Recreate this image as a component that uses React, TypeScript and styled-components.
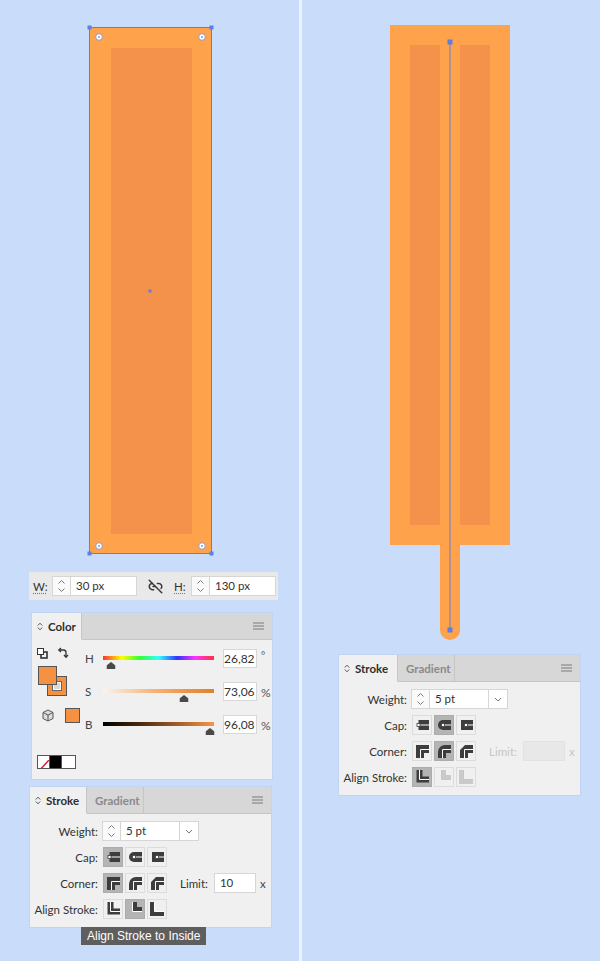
import React from "react";
import styled, { createGlobalStyle } from "styled-components";
import { Link2Off } from "lucide-react";

const ORANGE = "#f59242";
const ART_OUTER = "#fea24b";
const ART_INNER = "#f4924c";
const SEL_BLUE = "#5b7fe2";

const GlobalStyle = createGlobalStyle`
  html, body { margin: 0; padding: 0; background: #c9dcfa; }
  body { font-family: "Lato", "Open Sans", sans-serif; }
  #root { width: 600px; height: 961px; }
`;

const Page = styled.div`
  display: flex;
  width: 600px;
  height: 961px;
  background: #c9dcfa;
  overflow: hidden;
`;

const Column = styled.div<{ $w: number }>`
  width: ${(p) => p.$w}px;
  flex-shrink: 0;
  display: flex;
  flex-direction: column;
`;

const Divider = styled.div`
  width: 3px;
  flex-shrink: 0;
  background: #e8f4ff;
`;

const Canvas = styled.svg`
  display: block;
  flex-shrink: 0;
`;

/* ---------- size bar ---------- */
const SizeBar = styled.div`
  margin-left: 29px;
  width: 249px;
  height: 28px;
  background: #e9e9e9;
  display: flex;
  align-items: center;
  padding-left: 4px;
  box-sizing: border-box;
  font-size: 11.5px;
  color: #333;
`;

const DimLabel = styled.span<{ $w: number }>`
  width: ${(p) => p.$w}px;
  text-decoration: underline dotted #777;
  text-underline-offset: 2px;
`;

const FieldGroup = styled.div`
  display: flex;
  height: 20px;
  background: #fff;
  border: 1px solid #d6d6d6;
  box-sizing: border-box;
`;

const Spinner = styled.div<{ $w?: number }>`
  width: ${(p) => p.$w ?? 17}px;
  border-right: 1px solid #d6d6d6;
  display: flex;
  align-items: center;
  justify-content: center;
  background: #fafafa;
`;

const FieldText = styled.div<{ $w: number }>`
  width: ${(p) => p.$w}px;
  padding-left: 5px;
  box-sizing: border-box;
  font-size: 11.5px;
  line-height: 18px;
  color: #333;
`;

const Dropdown = styled.div`
  width: 18px;
  border-left: 1px solid #d6d6d6;
  display: flex;
  align-items: center;
  justify-content: center;
`;

const LinkSlot = styled.div`
  width: 37px;
  display: flex;
  justify-content: center;
  color: #3a3a3a;
`;

/* ---------- panels ---------- */
const Panel = styled.div<{ $w: number; $h: number; $mt: number; $ml: number }>`
  width: ${(p) => p.$w}px;
  height: ${(p) => p.$h}px;
  margin-top: ${(p) => p.$mt}px;
  margin-left: ${(p) => p.$ml}px;
  background: #f0f0f0;
  box-shadow: 0 0 0 1px rgba(0, 0, 0, 0.035);
  display: flex;
  flex-direction: column;
  flex-shrink: 0;
`;

const TabBar = styled.div`
  display: flex;
  height: 27px;
  flex-shrink: 0;
  background: #d7d7d7;
`;

const Tab = styled.div<{ $active?: boolean; $w: number }>`
  width: ${(p) => p.$w}px;
  box-sizing: border-box;
  display: flex;
  align-items: center;
  gap: 5px;
  padding-left: ${(p) => (p.$active ? 5 : 8)}px;
  font-size: 11.5px;
  font-weight: 700;
  color: ${(p) => (p.$active ? "#2e2e2e" : "#8a8a8a")};
  background: ${(p) => (p.$active ? "#f0f0f0" : "#d7d7d7")};
  border-right: 1px solid #c6c6c6;
  border-bottom: 1px solid ${(p) => (p.$active ? "#f0f0f0" : "#c6c6c6")};
`;

const TabFill = styled.div`
  flex: 1;
  display: flex;
  align-items: center;
  justify-content: flex-end;
  padding-right: 8px;
  border-bottom: 1px solid #c6c6c6;
`;

/* ---------- color panel ---------- */
const ColorBody = styled.div`
  display: flex;
  flex: 1;
`;

const SwatchCol = styled.div`
  width: 53px;
  padding-left: 5px;
  box-sizing: border-box;
  display: flex;
  flex-direction: column;
`;

const IconRow = styled.div<{ $mt: number; $gap: number; $pl?: number }>`
  display: flex;
  align-items: center;
  gap: ${(p) => p.$gap}px;
  margin-top: ${(p) => p.$mt}px;
  padding-left: ${(p) => p.$pl ?? 0}px;
`;

const FillStroke = styled.div`
  position: relative;
  width: 30px;
  height: 30px;
  margin-top: 7px;
  margin-left: 1px;
`;

const FillSwatch = styled.div`
  position: absolute;
  left: 0;
  top: 0;
  width: 19px;
  height: 19px;
  box-sizing: border-box;
  background: ${ORANGE};
  border: 1px solid #555;
  z-index: 2;
`;

const StrokeSwatch = styled.div`
  position: absolute;
  left: 9px;
  top: 10px;
  width: 20px;
  height: 20px;
  box-sizing: border-box;
  border: 1px solid #555;
  background: ${ORANGE};
  display: flex;
  align-items: center;
  justify-content: center;
`;

const StrokeHole = styled.div`
  width: 10px;
  height: 10px;
  box-sizing: border-box;
  border: 1px solid #666;
  background: #fff;
  display: flex;
  align-items: center;
  justify-content: center;
  &::after {
    content: "";
    width: 6px;
    height: 6px;
    background: #d9d9d9;
  }
`;

const SmallSwatch = styled.div`
  width: 15px;
  height: 15px;
  box-sizing: border-box;
  border: 1px solid #555;
  background: ${ORANGE};
`;

const QuickRow = styled.div`
  display: flex;
  margin-top: 32px;
`;

const QuickBox = styled.div<{ $bg: string; $w?: number }>`
  width: ${(p) => p.$w ?? 13}px;
  height: 14px;
  box-sizing: border-box;
  border: 1px solid #555;
  margin-right: -1px;
  background: ${(p) => p.$bg};
  overflow: hidden;
`;

const SliderCol = styled.div`
  display: flex;
  flex-direction: column;
  gap: 14px;
  padding-top: 9px;
`;

const SliderRow = styled.div`
  display: grid;
  grid-template-columns: 18px 111px 9px 34px 14px;
  height: 19px;
`;

const Channel = styled.span`
  font-size: 11.5px;
  line-height: 19px;
  color: #444;
`;

const Track = styled.div`
  position: relative;
  height: 19px;
`;

const Bar = styled.div<{ $bg: string }>`
  margin-top: 7px;
  height: 4px;
  background: ${(p) => p.$bg};
`;

const Thumb = styled.svg`
  position: absolute;
  top: 13px;
  transform: translateX(-50%);
`;

const ValueBox = styled.div`
  grid-column: 4;
  height: 19px;
  box-sizing: border-box;
  border: 1px solid #d7d7d7;
  background: #fff;
  font-size: 12px;
  line-height: 17px;
  text-align: right;
  padding-right: 3px;
  color: #333;
`;

const Unit = styled.span<{ $top?: boolean }>`
  font-size: ${(p) => (p.$top ? 10 : 12)}px;
  line-height: ${(p) => (p.$top ? 12 : 21)}px;
  padding-left: 4px;
  color: #555;
`;

/* ---------- stroke panel ---------- */
const StrokeBody = styled.div`
  display: grid;
  grid-template-columns: 68px auto;
  grid-auto-rows: 20px;
  column-gap: 4px;
  row-gap: 6px;
  padding-top: 7px;
  align-items: center;
`;

const RowLabel = styled.span`
  font-size: 11.5px;
  color: #333;
  text-align: right;
`;

const Controls = styled.div`
  display: flex;
  align-items: center;
`;

const BtnGroup = styled.div`
  display: flex;
  gap: 2px;
  padding-left: 1px;
`;

const IconBtn = styled.div<{ $selected?: boolean }>`
  width: 20px;
  height: 20px;
  box-sizing: border-box;
  border: 1px solid ${(p) => (p.$selected ? "#acacac" : "#dcdcdc")};
  background: ${(p) => (p.$selected ? "#b4b4b4" : "#f0f0f0")};
  display: flex;
  align-items: center;
  justify-content: center;
`;

const LimitLabel = styled.span<{ $disabled?: boolean }>`
  margin-left: 13px;
  font-size: 11.5px;
  color: ${(p) => (p.$disabled ? "#c6c6c6" : "#333")};
`;

const LimitInput = styled.div<{ $disabled?: boolean }>`
  margin-left: 6px;
  width: 42px;
  height: 20px;
  box-sizing: border-box;
  border: 1px solid ${(p) => (p.$disabled ? "#e2e2e2" : "#d6d6d6")};
  background: ${(p) => (p.$disabled ? "#e8e8e8" : "#fff")};
  font-size: 11.5px;
  line-height: 18px;
  padding-left: 5px;
  color: #333;
`;

const Times = styled.span<{ $disabled?: boolean }>`
  margin-left: 4px;
  font-size: 11.5px;
  color: ${(p) => (p.$disabled ? "#c6c6c6" : "#444")};
`;

const Tooltip = styled.div`
  margin-left: 81px;
  align-self: flex-start;
  height: 18px;
  padding: 0 6px;
  background: #5e5e5e;
  color: #fff;
  font-family: "Liberation Sans", Arial, sans-serif;
  font-size: 12px;
  line-height: 18px;
  white-space: nowrap;
`;

/* ---------- small icons ---------- */
const SpinIcon = () => (
  <svg width="9" height="16" viewBox="0 0 9 16">
    <path d="M1.5 5.5 L4.5 2.5 L7.5 5.5" fill="none" stroke="#7a7a7a" strokeWidth="1" />
    <path d="M1.5 10.5 L4.5 13.5 L7.5 10.5" fill="none" stroke="#7a7a7a" strokeWidth="1" />
  </svg>
);

const ChevronDown = () => (
  <svg width="8" height="5" viewBox="0 0 8 5">
    <path d="M1 1 L4 4 L7 1" fill="none" stroke="#777" strokeWidth="1" />
  </svg>
);

const TabArrows = () => (
  <svg width="6" height="9" viewBox="0 0 6 9">
    <path d="M0.8 3.5 L3 1.2 L5.2 3.5" fill="none" stroke="#555" strokeWidth="1" />
    <path d="M0.8 5.5 L3 7.8 L5.2 5.5" fill="none" stroke="#555" strokeWidth="1" />
  </svg>
);

const Hamburger = () => (
  <svg width="11" height="8" viewBox="0 0 11 8">
    <path d="M0 1 H11 M0 4 H11 M0 7 H11" stroke="#7a7a7a" strokeWidth="1" />
  </svg>
);

const DefaultColorsIcon = () => (
  <svg width="11" height="11" viewBox="0 0 11 11">
    <rect x="4" y="4" width="6" height="6" fill="none" stroke="#333" strokeWidth="1.6" />
    <rect x="0.5" y="0.5" width="6" height="6" fill="#fff" stroke="#333" strokeWidth="1" />
  </svg>
);

const SwapIcon = () => (
  <svg width="12" height="12" viewBox="0 0 12 12">
    <path d="M2.5 3 H6.5 Q9 3 9 5.5 V10" fill="none" stroke="#333" strokeWidth="1.3" />
    <path d="M4 1 L1.8 3 L4 5" fill="none" stroke="#333" strokeWidth="1.3" />
    <path d="M7 8 L9 10.2 L11 8" fill="none" stroke="#333" strokeWidth="1.3" />
  </svg>
);

const CubeIcon = () => (
  <svg width="12" height="13" viewBox="0 0 12 13">
    <path d="M6 1 L11 3.5 V9.5 L6 12 L1 9.5 V3.5 Z" fill="#ddd" stroke="#555" strokeWidth="1" />
    <path d="M1 3.5 L6 6 L11 3.5 M6 6 V12" fill="none" stroke="#555" strokeWidth="1" />
  </svg>
);

const ThumbShape = ({ left }: { left: number }) => (
  <Thumb width="9" height="7" viewBox="0 0 9 7" style={{ left: `${left}%` }}>
    <path d="M4.5 0 L9 3.5 V7 H0 V3.5 Z" fill="#4a4a4a" />
  </Thumb>
);

const DARK = "#3d3d3d";
const DIM = "#cacaca";

const CapIcon = ({ kind }: { kind: "butt" | "round" | "square" }) => {
  const x1 = kind === "butt" ? 3.5 : kind === "round" ? 6 : 7;
  return (
    <svg width="14" height="14" viewBox="0 0 14 14">
      <line x1={x1} y1="7" x2="14" y2="7" stroke={DARK} strokeWidth="10" strokeLinecap={kind} />
      <line x1={x1} y1="7" x2="14" y2="7" stroke="#fff" strokeWidth="1" />
      <rect x={x1 - 1.5} y="5.5" width="3" height="3" fill="#fff" stroke={DARK} strokeWidth="0.8" />
    </svg>
  );
};

const JOIN_SHAPES = {
  miter: "M1 14 V1 H14 V9 H9 V14 Z",
  round: "M1 14 V8 A7 7 0 0 1 8 1 H14 V9 H9 V14 Z",
  bevel: "M1 14 V6 L6 1 H14 V9 H9 V14 Z",
};

const JoinIcon = ({ kind }: { kind: "miter" | "round" | "bevel" }) => (
  <svg width="14" height="14" viewBox="0 0 14 14">
    <path d={JOIN_SHAPES[kind]} fill={DARK} />
    <path d="M5.5 14 V5.5 H14" fill="none" stroke="#fff" strokeWidth="1" />
  </svg>
);

const AlignIcon = ({ kind, dim }: { kind: "center" | "inside" | "outside"; dim?: boolean }) => {
  const c = dim ? DIM : DARK;
  let d = "M4.5 0 V9.5 H14";
  let w = 6;
  if (kind === "inside") {
    d = "M6.75 0 V7.25 H14";
    w = 4.5;
  }
  if (kind === "outside") {
    d = "M2.25 0 V11.75 H14";
    w = 4.5;
  }
  return (
    <svg width="14" height="14" viewBox="0 0 14 14">
      <path d={d} fill="none" stroke={c} strokeWidth={w} strokeLinejoin="miter" />
      <path d="M4.5 0 V9.5 H14" fill="none" stroke={dim ? "#9a9a9a" : "#fff"} strokeWidth="1" opacity={dim ? 0.35 : 1} />
    </svg>
  );
};

/* ---------- composites ---------- */
type StrokeProps = {
  w: number;
  mt: number;
  ml: number;
  strokeTabW: number;
  cap: number;
  join: number;
  align: number;
  limitDisabled?: boolean;
};

const StrokePanel = ({ w, mt, ml, strokeTabW, cap, join, align, limitDisabled }: StrokeProps) => (
  <Panel $w={w} $h={140} $mt={mt} $ml={ml}>
    <TabBar>
      <Tab $active $w={strokeTabW}>
        <TabArrows />
        Stroke
      </Tab>
      <Tab $w={57}>Gradient</Tab>
      <TabFill>
        <Hamburger />
      </TabFill>
    </TabBar>
    <StrokeBody>
      <RowLabel>Weight:</RowLabel>
      <Controls>
        <FieldGroup>
          <Spinner>
            <SpinIcon />
          </Spinner>
          <FieldText $w={58}>5 pt</FieldText>
          <Dropdown>
            <ChevronDown />
          </Dropdown>
        </FieldGroup>
      </Controls>

      <RowLabel>Cap:</RowLabel>
      <BtnGroup>
        {(["butt", "round", "square"] as const).map((k, i) => (
          <IconBtn key={k} $selected={i === cap}>
            <CapIcon kind={k} />
          </IconBtn>
        ))}
      </BtnGroup>

      <RowLabel>Corner:</RowLabel>
      <Controls>
        <BtnGroup>
          {(["miter", "round", "bevel"] as const).map((k, i) => (
            <IconBtn key={k} $selected={i === join}>
              <JoinIcon kind={k} />
            </IconBtn>
          ))}
        </BtnGroup>
        <LimitLabel $disabled={limitDisabled}>Limit:</LimitLabel>
        <LimitInput $disabled={limitDisabled}>{limitDisabled ? "" : "10"}</LimitInput>
        <Times $disabled={limitDisabled}>x</Times>
      </Controls>

      <RowLabel>Align Stroke:</RowLabel>
      <BtnGroup>
        {(["center", "inside", "outside"] as const).map((k, i) => (
          <IconBtn key={k} $selected={i === align}>
            <AlignIcon kind={k} dim={limitDisabled && i !== 0} />
          </IconBtn>
        ))}
      </BtnGroup>
    </StrokeBody>
  </Panel>
);

const sliders = [
  {
    ch: "H",
    value: "26,82",
    unit: "°",
    pos: 26.82 / 360,
    bg: "linear-gradient(to right, #f33 0%, #ff0 17%, #3f3 33%, #3ff 50%, #33f 67%, #f3f 83%, #f33 100%)",
  },
  {
    ch: "S",
    value: "73,06",
    unit: "%",
    pos: 0.7306,
    bg: "linear-gradient(to right, #f8f4f0 0%, #f6b47a 45%, #ef9444 75%, #dc832f 100%)",
  },
  {
    ch: "B",
    value: "96,08",
    unit: "%",
    pos: 0.9608,
    bg: "linear-gradient(to right, #000 0%, #4a2c12 35%, #a7622a 70%, #f7954a 100%)",
  },
];

const ColorPanel = () => (
  <Panel $w={240} $h={166} $mt={13} $ml={32}>
    <TabBar>
      <Tab $active $w={50}>
        <TabArrows />
        Color
      </Tab>
      <TabFill>
        <Hamburger />
      </TabFill>
    </TabBar>
    <ColorBody>
      <SwatchCol>
        <IconRow $mt={7} $gap={9}>
          <DefaultColorsIcon />
          <SwapIcon />
        </IconRow>
        <FillStroke>
          <StrokeSwatch>
            <StrokeHole />
          </StrokeSwatch>
          <FillSwatch />
        </FillStroke>
        <IconRow $mt={12} $gap={11} $pl={5}>
          <CubeIcon />
          <SmallSwatch />
        </IconRow>
        <QuickRow>
          <QuickBox $bg="#fff">
            <svg width="11" height="12" viewBox="0 0 11 12">
              <line x1="0" y1="12" x2="11" y2="0" stroke="#e0202a" strokeWidth="1.5" />
            </svg>
          </QuickBox>
          <QuickBox $bg="#000" />
          <QuickBox $bg="#fff" $w={15} />
        </QuickRow>
      </SwatchCol>
      <SliderCol>
        {sliders.map((s) => (
          <SliderRow key={s.ch}>
            <Channel>{s.ch}</Channel>
            <Track>
              <Bar $bg={s.bg} />
              <ThumbShape left={s.pos * 100} />
            </Track>
            <ValueBox>{s.value}</ValueBox>
            <Unit $top={s.unit === "°"}>{s.unit}</Unit>
          </SliderRow>
        ))}
      </SliderCol>
    </ColorBody>
  </Panel>
);

const Handle = ({ x, y }: { x: number; y: number }) => (
  <rect x={x - 2} y={y - 2} width="4" height="4" fill={SEL_BLUE} />
);

const CornerWidget = ({ x, y }: { x: number; y: number }) => (
  <g>
    <circle cx={x} cy={y} r="3.3" fill="#fff" stroke="#8d97c8" strokeWidth="1" />
    <circle cx={x} cy={y} r="1" fill="#8d97c8" />
  </g>
);

const LeftArt = () => (
  <Canvas width="299" height="572" viewBox="0 0 299 572">
    <rect x="90" y="27" width="121" height="527" fill={ART_OUTER} />
    <rect x="111" y="48" width="81" height="486" fill={ART_INNER} />
    <rect x="89.5" y="27.5" width="122" height="526" fill="none" stroke={SEL_BLUE} strokeWidth="1" />
    <Handle x={89.5} y={27.5} />
    <Handle x={211.5} y={27.5} />
    <Handle x={89.5} y={553.5} />
    <Handle x={211.5} y={553.5} />
    <CornerWidget x={99} y={37} />
    <CornerWidget x={202} y={37} />
    <CornerWidget x={99} y={546} />
    <CornerWidget x={202} y={546} />
    <rect x="148.5" y="289.5" width="3" height="3" fill={SEL_BLUE} />
  </Canvas>
);

const RightArt = () => (
  <Canvas width="298" height="655" viewBox="0 0 298 655">
    <line x1="148" y1="500" x2="148" y2="630" stroke={ART_OUTER} strokeWidth="20" strokeLinecap="round" />
    <rect x="88" y="25" width="120" height="520" fill={ART_OUTER} />
    <rect x="108" y="45" width="30" height="480" fill={ART_INNER} />
    <rect x="158" y="45" width="30" height="480" fill={ART_INNER} />
    <line x1="148" y1="42" x2="148" y2="630" stroke="#6f7fd4" strokeWidth="1" />
    <rect x="145.5" y="39.5" width="5" height="5" fill={SEL_BLUE} />
    <rect x="145.5" y="627.5" width="5" height="5" fill={SEL_BLUE} />
  </Canvas>
);

export default function App() {
  return (
    <>
      <GlobalStyle />
      <Page>
        <Column $w={299}>
          <LeftArt />
          <SizeBar>
            <DimLabel $w={19}>W:</DimLabel>
            <FieldGroup>
              <Spinner>
                <SpinIcon />
              </Spinner>
              <FieldText $w={65}>30 px</FieldText>
            </FieldGroup>
            <LinkSlot>
              <Link2Off size={15} strokeWidth={2.4} />
            </LinkSlot>
            <DimLabel $w={17}>H:</DimLabel>
            <FieldGroup>
              <Spinner>
                <SpinIcon />
              </Spinner>
              <FieldText $w={65}>130 px</FieldText>
            </FieldGroup>
          </SizeBar>
          <ColorPanel />
          <StrokePanel w={241} mt={8} ml={30} strokeTabW={57} cap={0} join={0} align={1} />
          <Tooltip>Align Stroke to Inside</Tooltip>
        </Column>
        <Divider />
        <Column $w={298}>
          <RightArt />
          <StrokePanel w={241} mt={0} ml={37} strokeTabW={59} cap={1} join={1} align={0} limitDisabled />
        </Column>
      </Page>
    </>
  );
}
